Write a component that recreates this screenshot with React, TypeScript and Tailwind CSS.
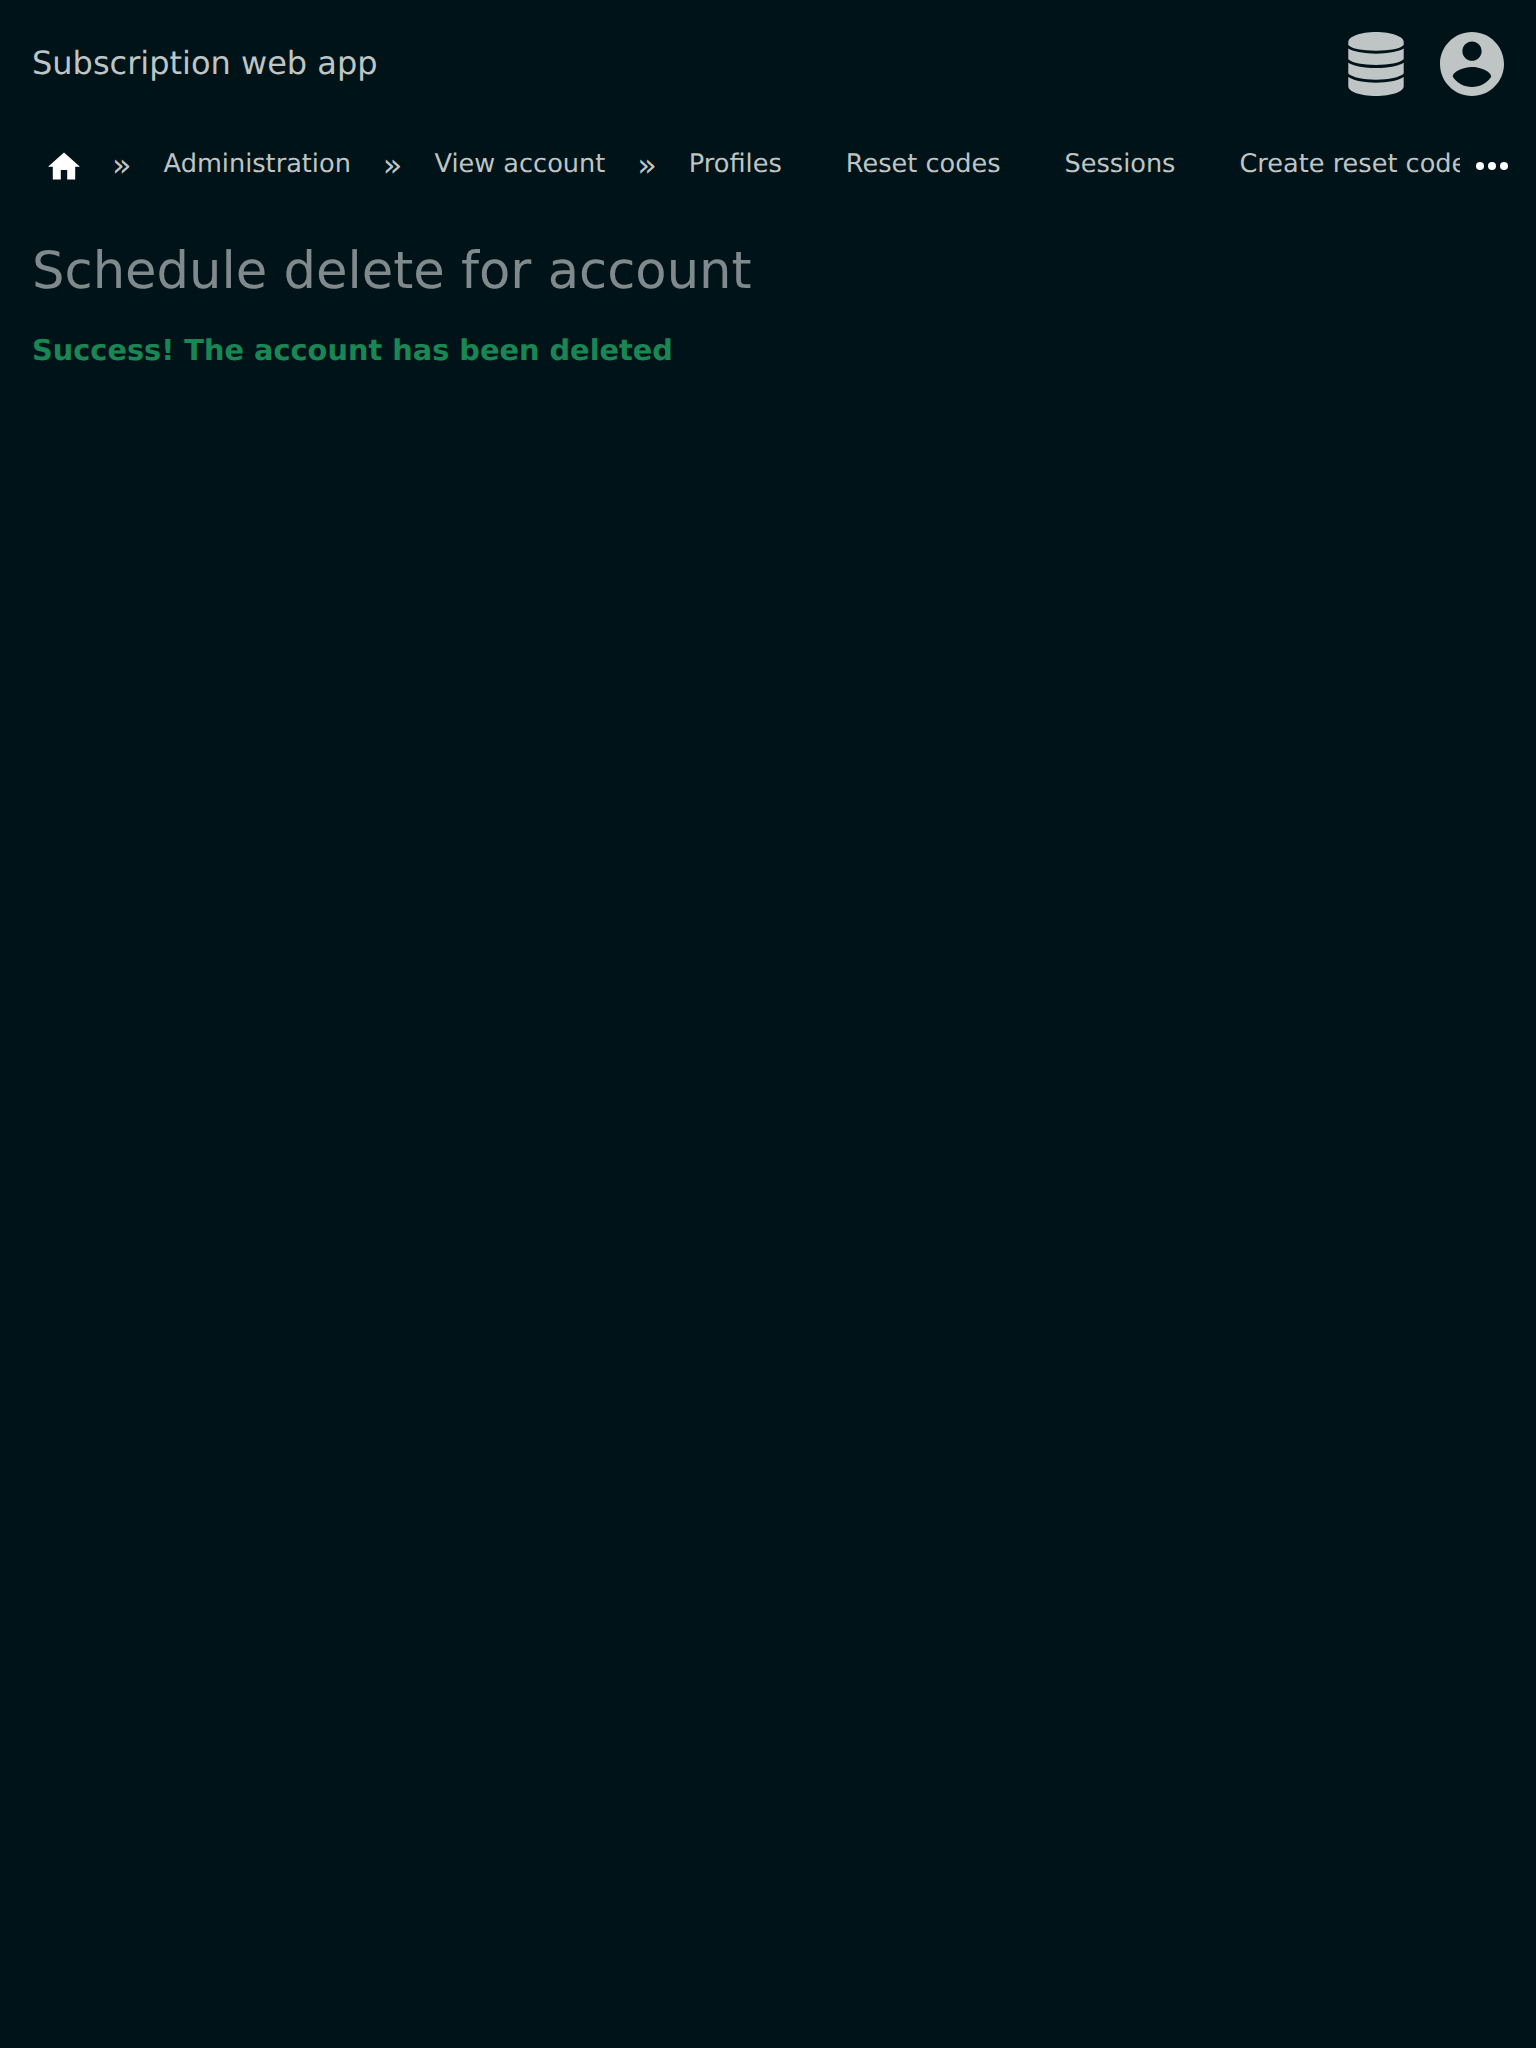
const crumb = "shrink-0 whitespace-nowrap pb-1 text-[25.6px] leading-[40px]";

function Separator() {
  return <span className="shrink-0 pb-0.5 text-[32px] leading-[40px]">»</span>;
}

function DatabaseIcon() {
  return (
    <svg className="h-16 w-16" viewBox="0 0 64 64" fill="currentColor">
      <path d="M4.300 10C4.300 4.500 16.500 0 32 0s27.700 4.500 27.700 10v3C56.500 16.600 46 18.700 32 18.700S7.500 16.600 4.300 13z" />
      <path d="M4.300 16.600c5.700 3.300 16.200 5.100 27.700 5.100s22-1.800 27.700-5.100v10.700c-4 3.600-14.700 5.700-27.700 5.700S8.300 30.900 4.300 27.300z" />
      <path d="M4.300 30.700c5.700 3.500 16.200 5.400 27.700 5.400s22-1.900 27.700-5.400v10.900c-4 3.900-14.700 6.100-27.700 6.100S8.300 45.500 4.300 41.600z" />
      <path d="M4.300 45c5.700 3.700 16.200 5.700 27.700 5.700s22-2 27.700-5.700v9.200C59.700 59.600 47.500 64 32 64S4.300 59.600 4.300 54.200z" />
    </svg>
  );
}

export default function App() {
  return (
    <div className="min-h-[2048px] w-full overflow-hidden bg-[#001318] font-['DejaVu_Sans',sans-serif] text-[#bfc4c5] [text-rendering:geometricPrecision]">
      <header className="flex h-32 items-center justify-between px-8">
        <div className="pb-0.5 text-[32px] leading-[48px]">Subscription web app</div>
        <div className="flex gap-8">
          <DatabaseIcon />
          <svg className="h-16 w-16" viewBox="2 2 20 20" fill="currentColor">
            <path d="M12 2C6.480 2 2 6.480 2 12s4.480 10 10 10 10-4.480 10-10S17.520 2 12 2zm0 3c1.660 0 3 1.340 3 3s-1.340 3-3 3-3-1.340-3-3 1.340-3 3-3zm0 14.200c-2.500 0-4.710-1.280-6-3.220.030-1.990 4-3.080 6-3.080 1.990 0 5.970 1.090 6 3.080-1.290 1.940-3.500 3.220-6 3.220z" />
          </svg>
        </div>
      </header>
      <nav className="flex h-[76px] items-center gap-4 pl-8">
        <div className="flex w-[1428px] items-center gap-16 overflow-hidden pl-4">
          <div className="flex shrink-0 items-center gap-8">
            <svg className="h-8 w-8 shrink-0 text-white" viewBox="2 1.5 20 20" fill="currentColor">
              <path d="M10 20v-6h4v6h5v-8h3L12 3 2 12h3v8z" />
            </svg>
            <Separator />
            <a className={crumb}>Administration</a>
            <Separator />
            <a className={crumb}>View account</a>
            <Separator />
            <a className={crumb}>Profiles</a>
          </div>
          <a className={crumb}>Reset codes</a>
          <a className={crumb}>Sessions</a>
          <a className={crumb}>Create reset code</a>
        </div>
        <svg className="h-8 w-8 shrink-0 text-white" viewBox="0 0 32 32" fill="currentColor">
          <circle cx="4" cy="16" r="4" />
          <circle cx="16" cy="16" r="4" />
          <circle cx="28" cy="16" r="4" />
        </svg>
      </nav>
      <main className="px-8 pt-[33px]">
        <h1 className="text-[51.2px] leading-[68px] text-[#80898c]">Schedule delete for account</h1>
        <p className="mt-[23px] text-[28.8px] font-bold leading-[44px] text-[#198754]">Success! The account has been deleted</p>
      </main>
    </div>
  );
}
